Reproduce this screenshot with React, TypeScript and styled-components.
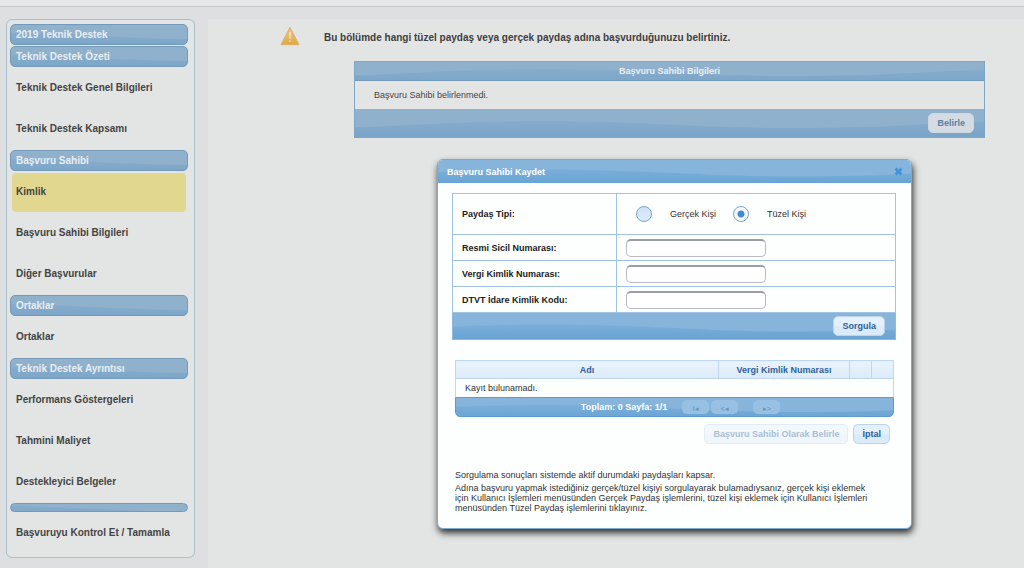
import React from "react";
import styled, { createGlobalStyle, css } from "styled-components";

const wave = (top: string, crest: string, low: string) => {
  const svg = `<svg xmlns='http://www.w3.org/2000/svg' width='500' height='100'><defs><linearGradient id='g' gradientUnits='userSpaceOnUse' x1='0' y1='48' x2='0' y2='62'><stop offset='0' stop-color='${crest}'/><stop offset='1' stop-color='${low}'/></linearGradient></defs><rect width='500' height='100' fill='${top}'/><path d='M0 51.5C40 49 80 48 120 48C220 48 280 55 370 55C420 55 460 54 500 51.5V100H0Z' fill='url(#g)'/></svg>`;
  return `url("data:image/svg+xml,${encodeURIComponent(svg).replace(/\(/g, "%28").replace(/\)/g, "%29").replace(/'/g, "%27")}") 50% 50% repeat-x`;
};

const dimBar = css`
  background: ${wave("#8fb1cc", "#87accb", "#7aa5c9")};
`;
const brightBar = css`
  background: ${wave("#87b4da", "#7aaed9", "#69a4d3")};
`;

const GlobalStyle = createGlobalStyle`
  *, *::before, *::after { box-sizing: border-box; }
  body {
    margin: 0;
    background: #dedfe1;
    color: #444;
    font-family: "Liberation Sans", Arial, sans-serif;
    font-size: 9px;
  }
  button, input { font-family: inherit; }
`;

const TopStrip = styled.header`
  height: 7px;
  background: #e6e7e9;
  border-bottom: 1px solid #c6c8cb;
`;

const Layout = styled.div`
  display: flex;
  align-items: flex-start;
  padding-top: 12px;
  min-height: calc(100vh - 7px);
`;

const Sidebar = styled.nav`
  flex: 0 0 189px;
  margin: 0 13px 10px 6px;
  padding: 4px 6px 4px 3px;
  border: 1px solid #a9bfcd;
  border-radius: 6px;
  background: #e3e4e4;
  display: flex;
  flex-direction: column;
  gap: 1px;
`;

const MenuGroup = styled.section`
  display: flex;
  flex-direction: column;
  gap: 2px;
`;

const MenuBar = styled.h2<{ $slim?: boolean }>`
  ${dimBar}
  margin: 0;
  height: ${(p) => (p.$slim ? 9 : 21)}px;
  padding: 0 5px;
  border: 1px solid #7599b8;
  border-radius: 5px;
  color: #e9edf1;
  font-size: 10px;
  line-height: 20px;
`;

const MenuLink = styled.a<{ $active?: boolean }>`
  height: 39px;
  margin: 0 2px;
  padding: 0 4px;
  border-radius: 4px;
  background: ${(p) => (p.$active ? "#e2d78e" : "transparent")};
  color: #444;
  font-size: 10px;
  font-weight: bold;
  line-height: 37px;
  text-decoration: none;
`;

const Content = styled.main`
  flex: 1;
  min-width: 0;
  align-self: stretch;
  background: #e3e4e4;
  padding: 7px 39px 20px 72px;
`;

const Notice = styled.p`
  display: flex;
  align-items: flex-start;
  gap: 24px;
  margin: 0 0 11px;
  color: #404040;
  font-size: 10px;
  font-weight: bold;
  line-height: 24px;
`;

const Panel = styled.section`
  margin-left: 74px;
  border: 1px solid #7da6c8;
`;

const PanelTitle = styled.h3`
  ${dimBar}
  margin: 0;
  border-bottom: 1px solid #7599b8;
  color: #e9edf1;
  font-size: 9px;
  line-height: 18px;
  text-align: center;
`;

const PanelText = styled.p`
  margin: 0;
  padding: 0 19px;
  line-height: 28px;
`;

const PanelFooter = styled.div`
  ${dimBar}
  display: flex;
  justify-content: flex-end;
  padding: 4px 10px;
`;

const Button = styled.button<{ $dim?: boolean }>`
  height: 20px;
  padding: 0 8px;
  border: 1px solid ${(p) => (p.$dim ? "#cfd7df" : "#bcd3ea")};
  border-radius: 5px;
  background: ${(p) => (p.$dim ? "#d5dbe2" : "linear-gradient(#e4f0fb 50%, #dbebfa 50%)")};
  color: ${(p) => (p.$dim ? "#5b7ea6" : "#2e6099")};
  font-size: 9px;
  font-weight: bold;
  &:disabled { opacity: 0.4; }
`;

const Dialog = styled.div`
  position: absolute;
  top: 159px;
  left: 437px;
  width: 475px;
  border: 1px solid #7fa9cb;
  border-radius: 6px;
  background: #fdfefe;
  box-shadow: 1px 4px 7px rgba(0, 0, 0, 0.8);
  color: #333;
  overflow: hidden;
`;

const DialogHeader = styled.header`
  ${brightBar}
  display: flex;
  align-items: center;
  justify-content: space-between;
  height: 23px;
  padding: 0 8px 0 9px;
`;

const DialogTitle = styled.h2`
  margin: 0;
  color: #fff;
  font-size: 9px;
`;

const CloseButton = styled.button`
  display: flex;
  padding: 0;
  border: 0;
  background: none;
`;

const DialogBody = styled.div`
  padding: 10px 15px 12px 14px;
`;

const FormTable = styled.table`
  width: 100%;
  border-collapse: collapse;
  border: 1px solid #8fb9dc;
`;

const FormRow = styled.tr<{ $tall?: boolean }>`
  height: ${(p) => (p.$tall ? 41 : 26)}px;
  th, td {
    border: 1px solid #9fc3e0;
    padding: 0 9px;
    text-align: left;
  }
  th { width: 164px; color: #222; }
`;

const FormFooter = styled.td`
  ${brightBar}
  height: 27px;
  padding: 0 10px;
  text-align: right;
`;

const TextInput = styled.input`
  display: block;
  width: 140px;
  height: 18px;
  border: 1px solid #b9bcc8;
  border-top: 2px solid #9a9da3;
  border-radius: 5px;
  background: #fff;
  font-size: 9px;
`;

const Radios = styled.div`
  display: flex;
  gap: 17px;
  padding-left: 10px;
`;

const RadioLabel = styled.label`
  display: flex;
  align-items: center;
  gap: 18px;
`;

const Radio = styled.input`
  appearance: none;
  width: 16px;
  height: 16px;
  margin: 0;
  border: 1px solid #7ca6cc;
  border-radius: 50%;
  background: linear-gradient(#cfe2f5, #dcebfa);
  &:checked {
    background: radial-gradient(circle, #3d8dd0 0 3px, #f7fafd 4px);
  }
`;

const Results = styled.div`
  margin: 20px 2px 0 3px;
`;

const ResultTable = styled.table`
  width: 100%;
  border-collapse: collapse;
  table-layout: fixed;
  th {
    height: 18px;
    padding: 0;
    border: 1px solid #bfd8ee;
    background: linear-gradient(#e9f3fc, #dcebf9);
    color: #2e6099;
  }
  td {
    height: 18px;
    padding: 0 9px;
    border: 1px solid #bfd8ee;
    border-bottom: 0;
  }
`;

const NumberCol = styled.col`
  width: 131px;
`;

const ActionCol = styled.col`
  width: 22px;
`;

const Pager = styled.div`
  ${brightBar}
  display: flex;
  align-items: center;
  justify-content: center;
  height: 20px;
  padding-left: 12px;
  border: 1px solid #5c9ccc;
  border-radius: 0 0 5px 5px;
  color: #fff;
  font-weight: bold;
`;

const PagerButton = styled.button<{ $apart?: boolean }>`
  width: 27px;
  height: 14px;
  margin-left: ${(p) => (p.$apart ? 15 : 2)}px;
  padding: 4px 0 0;
  border: 0;
  border-radius: 5px;
  background: #97c0e2;
  color: #5f92c0;
  font-size: 7px;
  line-height: 10px;
`;

const PageInfo = styled.span`
  margin-right: 13px;
`;

const Actions = styled.div`
  display: flex;
  justify-content: flex-end;
  gap: 5px;
  padding: 7px 6px 26px 0;
`;

const Help = styled.p`
  margin: 0 0 3px;
  padding: 0 18px 0 3px;
  line-height: 10px;
`;

const WarningIcon = () => (
  <svg width="20" height="20" viewBox="0 0 20 20" aria-hidden="true">
    <defs>
      <linearGradient id="amber" x1="0" y1="0" x2="0" y2="1">
        <stop offset="0" stopColor="#e9c98a" />
        <stop offset="1" stopColor="#e2a83c" />
      </linearGradient>
    </defs>
    <path d="M10 1.3 L19 18.7 H1 Z" fill="url(#amber)" stroke="#dfb068" strokeLinejoin="round" />
    <path d="M9.2 6.2 H10.8 L10.5 13 H9.5 Z M9.3 14.4 H10.7 V15.8 H9.3 Z" fill="#f0ece0" />
  </svg>
);

const CloseIcon = () => (
  <svg width="9" height="9" viewBox="0 0 9 9" aria-hidden="true">
    <path d="M1.5 1.5 L7.5 7.5 M7.5 1.5 L1.5 7.5" stroke="#3f93dc" strokeWidth="2.6" />
  </svg>
);

const menu = [
  { title: "Teknik Destek Özeti", items: ["Teknik Destek Genel Bilgileri", "Teknik Destek Kapsamı"] },
  { title: "Başvuru Sahibi", items: ["Kimlik", "Başvuru Sahibi Bilgileri", "Diğer Başvurular"] },
  { title: "Ortaklar", items: ["Ortaklar"] },
  { title: "Teknik Destek Ayrıntısı", items: ["Performans Göstergeleri", "Tahmini Maliyet", "Destekleyici Belgeler"] },
  { title: "", items: ["Başvuruyu Kontrol Et / Tamamla"] },
];

const fields = [
  { id: "sicil", label: "Resmi Sicil Numarası:" },
  { id: "vergi", label: "Vergi Kimlik Numarası:" },
  { id: "dtvt", label: "DTVT İdare Kimlik Kodu:" },
];

export default function App() {
  return (
    <>
      <GlobalStyle />
      <TopStrip />
      <Layout>
        <Sidebar>
          <MenuBar>2019 Teknik Destek</MenuBar>
          {menu.map((group) => (
            <MenuGroup key={group.title}>
              <MenuBar $slim={!group.title}>{group.title}</MenuBar>
              {group.items.map((item) => (
                <MenuLink key={item} href="#" $active={item === "Kimlik"}>{item}</MenuLink>
              ))}
            </MenuGroup>
          ))}
        </Sidebar>
        <Content>
          <Notice>
            <WarningIcon />
            Bu bölümde hangi tüzel paydaş veya gerçek paydaş adına başvurduğunuzu belirtiniz.
          </Notice>
          <Panel>
            <PanelTitle>Başvuru Sahibi Bilgileri</PanelTitle>
            <PanelText>Başvuru Sahibi belirlenmedi.</PanelText>
            <PanelFooter>
              <Button $dim>Belirle</Button>
            </PanelFooter>
          </Panel>
        </Content>
      </Layout>
      <Dialog role="dialog" aria-labelledby="dialog-title">
        <DialogHeader>
          <DialogTitle id="dialog-title">Başvuru Sahibi Kaydet</DialogTitle>
          <CloseButton aria-label="Kapat"><CloseIcon /></CloseButton>
        </DialogHeader>
        <DialogBody>
          <FormTable>
            <tbody>
              <FormRow $tall>
                <th>Paydaş Tipi:</th>
                <td>
                  <Radios>
                    <RadioLabel><Radio type="radio" name="tip" />Gerçek Kişi</RadioLabel>
                    <RadioLabel><Radio type="radio" name="tip" defaultChecked />Tüzel Kişi</RadioLabel>
                  </Radios>
                </td>
              </FormRow>
              {fields.map((f) => (
                <FormRow key={f.id}>
                  <th><label htmlFor={f.id}>{f.label}</label></th>
                  <td><TextInput id={f.id} type="text" /></td>
                </FormRow>
              ))}
              <tr>
                <FormFooter colSpan={2}><Button>Sorgula</Button></FormFooter>
              </tr>
            </tbody>
          </FormTable>
          <Results>
            <ResultTable>
              <colgroup>
                <col />
                <NumberCol />
                <ActionCol />
                <ActionCol />
              </colgroup>
              <thead>
                <tr><th>Adı</th><th>Vergi Kimlik Numarası</th><th /><th /></tr>
              </thead>
              <tbody>
                <tr><td colSpan={4}>Kayıt bulunamadı.</td></tr>
              </tbody>
            </ResultTable>
            <Pager>
              <PageInfo>Toplam: 0 Sayfa: 1/1</PageInfo>
              <PagerButton>I◂</PagerButton>
              <PagerButton>&lt;◂</PagerButton>
              <PagerButton $apart>▸&gt;</PagerButton>
            </Pager>
          </Results>
          <Actions>
            <Button disabled>Başvuru Sahibi Olarak Belirle</Button>
            <Button>İptal</Button>
          </Actions>
          <Help>Sorgulama sonuçları sistemde aktif durumdaki paydaşları kapsar.</Help>
          <Help>
            Adına başvuru yapmak istediğiniz gerçek/tüzel kişiyi sorgulayarak bulamadıysanız, gerçek kişi eklemek
            için Kullanıcı İşlemleri menüsünden Gerçek Paydaş işlemlerini, tüzel kişi eklemek için Kullanıcı İşlemleri
            menüsünden Tüzel Paydaş işlemlerini tıklayınız.
          </Help>
        </DialogBody>
      </Dialog>
    </>
  );
}
